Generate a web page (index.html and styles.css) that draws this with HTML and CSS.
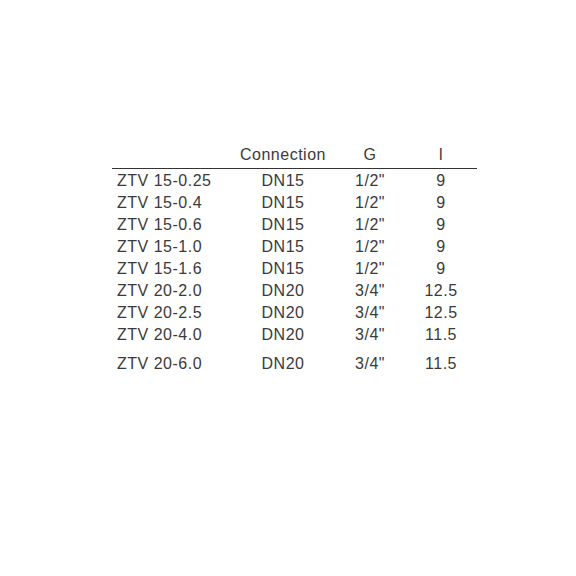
FILE: index.html
```html
<!DOCTYPE html>
<html>
<head>
<meta charset="utf-8">
<link rel="stylesheet" href="styles.css">
</head>
<body>
<div class="page">
  <div class="spec">
    <div class="row head">
      <span class="c1"></span><span class="c">Connection</span><span class="c">G</span><span class="c">l</span><span></span>
    </div>
    <div class="row"><span class="c1">ZTV 15-0.25</span><span class="c">DN15</span><span class="c">1/2"</span><span class="c">9</span><span></span></div>
    <div class="row"><span class="c1">ZTV 15-0.4</span><span class="c">DN15</span><span class="c">1/2"</span><span class="c">9</span><span></span></div>
    <div class="row"><span class="c1">ZTV 15-0.6</span><span class="c">DN15</span><span class="c">1/2"</span><span class="c">9</span><span></span></div>
    <div class="row"><span class="c1">ZTV 15-1.0</span><span class="c">DN15</span><span class="c">1/2"</span><span class="c">9</span><span></span></div>
    <div class="row"><span class="c1">ZTV 15-1.6</span><span class="c">DN15</span><span class="c">1/2"</span><span class="c">9</span><span></span></div>
    <div class="row"><span class="c1">ZTV 20-2.0</span><span class="c">DN20</span><span class="c">3/4"</span><span class="c">12.5</span><span></span></div>
    <div class="row"><span class="c1">ZTV 20-2.5</span><span class="c">DN20</span><span class="c">3/4"</span><span class="c">12.5</span><span></span></div>
    <div class="row"><span class="c1">ZTV 20-4.0</span><span class="c">DN20</span><span class="c">3/4"</span><span class="c">11.5</span><span></span></div>
    <div class="row last"><span class="c1">ZTV 20-6.0</span><span class="c">DN20</span><span class="c">3/4"</span><span class="c">11.5</span><span></span></div>
  </div>
</div>
</body>
</html>
```
FILE: styles.css
```css
html, body {
  margin: 0;
  padding: 0;
  background: #ffffff;
}
.page {
  width: 576px;
  height: 576px;
  padding-top: 144px;
  padding-left: 112px;
  box-sizing: border-box;
}
.spec {
  width: 365px;
  font-family: "Liberation Sans", Arial, sans-serif;
  font-size: 16px;
  letter-spacing: 0.5px;
  color: #3a3a3a;
}
.row {
  display: grid;
  grid-template-columns: 128px 86px 88px 54px 1fr;
  height: 22px;
  line-height: 22px;
}
.row.head {
  height: 24px;
  border-bottom: 1px solid #333333;
  margin-bottom: 1px;
}
.row.last {
  margin-top: 7px;
}
.c1 {
  padding-left: 5px;
}
.c {
  text-align: center;
}
```
